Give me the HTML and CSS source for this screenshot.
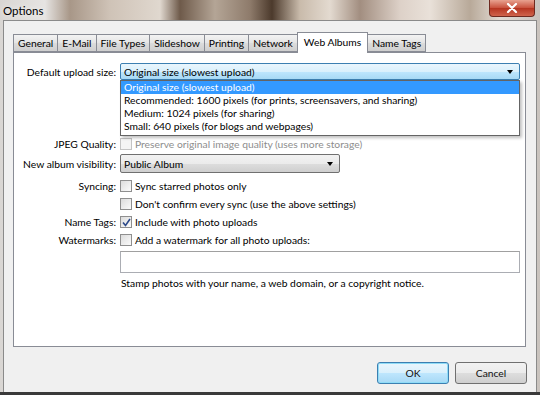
FILE: index.html
```html
<!DOCTYPE html>
<html lang="en">
  <head>
    <meta charset="UTF-8" />
    <title>Options</title>
    <link rel="stylesheet" href="styles.css">
  </head>
  <body>
    <div class="window">
      <div class="titlebar">
        <span class="title">Options</span>
        <button class="close-btn">
          <svg width="12" height="10" viewBox="0 0 12 10">
            <path d="M2 1 L10 9 M10 1 L2 9" stroke="#fff" stroke-width="2.2" stroke-linecap="round" />
          </svg>
        </button>
      </div>

      <div class="client">
        <div class="tabs">
          <div class="tab">General</div>
          <div class="tab">E-Mail</div>
          <div class="tab">File Types</div>
          <div class="tab">Slideshow</div>
          <div class="tab">Printing</div>
          <div class="tab">Network</div>
          <div class="tab active">Web Albums</div>
          <div class="tab">Name Tags</div>
        </div>

        <div class="panel">
          <div class="row row-upload">
            <label class="field-label">Default upload size:</label>
            <div class="combo combo-focus">
              <span>Original size (slowest upload)</span>
              <span class="arrow"></span>
              <ul class="combo-list">
                <li class="selected">Original size (slowest upload)</li>
                <li>Recommended: 1600 pixels (for prints, screensavers, and sharing)</li>
                <li>Medium: 1024 pixels (for sharing)</li>
                <li>Small: 640 pixels (for blogs and webpages)</li>
              </ul>
            </div>
          </div>

          <div class="row row-jpeg">
            <label class="field-label">JPEG Quality:</label>
            <div class="check disabled"><span class="box"></span>Preserve original image quality (uses more storage)</div>
          </div>

          <div class="row row-visibility">
            <label class="field-label">New album visibility:</label>
            <div class="combo combo-plain">
              <span>Public Album</span>
              <span class="arrow"></span>
            </div>
          </div>

          <div class="row row-sync">
            <label class="field-label">Syncing:</label>
            <div class="check"><span class="box"></span>Sync starred photos only</div>
          </div>

          <div class="row row-confirm">
            <label class="field-label"></label>
            <div class="check"><span class="box"></span>Don't confirm every sync (use the above settings)</div>
          </div>

          <div class="row row-tags">
            <label class="field-label">Name Tags:</label>
            <div class="check"><span class="box checked">
              <svg width="9" height="9" viewBox="0 0 9 9"><path d="M1 4.5 L3.5 7.5 L8 1" fill="none" stroke="#2d4a8a" stroke-width="1.6" /></svg>
            </span>Include with photo uploads</div>
          </div>

          <div class="row row-watermark">
            <label class="field-label">Watermarks:</label>
            <div class="check"><span class="box"></span>Add a watermark for all photo uploads:</div>
          </div>

          <div class="row row-input">
            <label class="field-label"></label>
            <input type="text" class="text-input" />
          </div>

          <div class="row row-hint">
            <label class="field-label"></label>
            <p class="hint">Stamp photos with your name, a web domain, or a copyright notice.</p>
          </div>
        </div>

        <div class="buttons">
          <button class="btn btn-default">OK</button>
          <button class="btn">Cancel</button>
        </div>
      </div>
    </div>
  </body>
</html>
```

FILE: styles.css
```css
* {
  box-sizing: border-box;
}

body {
  margin: 0;
  width: 540px;
  height: 395px;
  overflow: hidden;
  font-family: Lato, "Noto Sans", sans-serif;
  font-size: 10.3px;
  color: #000;
}

.window {
  width: 540px;
  height: 395px;
  display: flex;
  flex-direction: column;
  background: linear-gradient(90deg, #d9d6d3 0, #e6e4e2 45px, #a89788 70px, #cfc3b7 110px, #e0d8cf 160px, #6e5a4a 180px, #b4a596 215px, #8e7b6b 250px, #4c3a2c 272px, #c9bbab 300px, #e3dad0 330px, #a28e80 360px, #ddd1c8 400px, #e9e1d9 430px, #b8a999 470px, #e2dbd4 500px, #c8c2bd 540px);
  border-bottom: 3px solid #3a3a3a;
}

.titlebar {
  height: 20px;
  position: relative;
  display: flex;
  align-items: center;
  padding-left: 3px;
}

.title {
  font-size: 11.5px;
  color: #000;
  text-shadow: 0 0 6px rgba(255, 255, 255, 0.9);
}

.close-btn {
  position: absolute;
  right: 5px;
  top: 0;
  width: 46px;
  height: 17px;
  border: 1px solid #6e2a20;
  border-top: none;
  border-radius: 0 0 4px 4px;
  background: linear-gradient(#e8a290, #c8503c 50%, #b53420 51%, #d0644c);
  display: flex;
  align-items: center;
  justify-content: center;
  padding: 0;
}

.client {
  flex: 1;
  margin: 0 3px 0 3px;
  background: #f0f0f0;
  border: 1px solid #8a8a8a;
  border-bottom: none;
  padding: 12px 9px 0 9px;
  display: flex;
  flex-direction: column;
}

.tabs {
  display: flex;
  align-items: flex-end;
  height: 19px;
  position: relative;
  z-index: 1;
}

.tab {
  height: 18px;
  padding: 0 4px;
  border: 1px solid #898c95;
  border-right: none;
  background: linear-gradient(#f3f3f3, #e4e4e4 50%, #dcdcdc 51%, #cfcfcf);
  display: flex;
  align-items: center;
  white-space: nowrap;
}

.tab:last-child {
  border-right: 1px solid #898c95;
}

.tab.active {
  height: 21px;
  padding: 0 6px 2px;
  background: #fff;
  border-right: 1px solid #898c95;
  border-bottom: none;
  margin-bottom: -1px;
}

.tab.active + .tab {
  border-left: none;
}

.panel {
  height: 295px;
  background: #fff;
  border: 1px solid #898c95;
  margin-right: 1px;
  padding-top: 10px;
  display: flex;
  flex-direction: column;
}

.row {
  display: grid;
  grid-template-columns: 102px 1fr;
  column-gap: 4px;
  align-items: center;
  padding-right: 5px;
}

.field-label {
  text-align: right;
  white-space: nowrap;
}

.row-upload {
  height: 17px;
}

.row-jpeg {
  margin-top: 55px;
  height: 17px;
}

.row-visibility {
  margin-top: 2px;
  height: 19px;
}

.row-sync {
  margin-top: 4px;
  height: 18px;
}

.row-confirm,
.row-tags,
.row-watermark {
  height: 18px;
}

.row-input {
  margin-top: 2px;
  height: 22px;
}

.row-hint {
  margin-top: 1px;
  height: 18px;
}

.combo {
  position: relative;
  height: 17px;
  border: 1px solid #707070;
  border-radius: 2px;
  display: flex;
  align-items: center;
  padding-left: 3px;
}

.combo-focus {
  border-color: #3c7fb1;
  background: linear-gradient(#eaf6fd, #d9f0fc 50%, #bee6fd 51%, #a7d9f5);
}

.combo-plain {
  width: 220px;
  height: 19px;
  background: linear-gradient(#f2f2f2, #ebebeb 50%, #dddddd 51%, #cfcfcf);
}

.arrow {
  position: absolute;
  right: 6px;
  top: 6px;
  width: 0;
  height: 0;
  border-left: 3px solid transparent;
  border-right: 3px solid transparent;
  border-top: 4px solid #000;
}

.combo-plain .arrow {
  top: 7px;
}

.combo-list {
  position: absolute;
  left: -1px;
  right: -1px;
  top: 16px;
  margin: 0;
  padding: 0 0 2px;
  list-style: none;
  background: #fff;
  border: 1px solid #646464;
  box-shadow: 2px 2px 3px rgba(0, 0, 0, 0.25);
  z-index: 2;
}

.combo-list li {
  height: 13px;
  line-height: 13px;
  padding-left: 3px;
  white-space: nowrap;
}

.combo-list li.selected {
  background: #3399ff;
  color: #fff;
}

.check {
  display: flex;
  align-items: center;
  gap: 3px;
  white-space: nowrap;
}

.check.disabled {
  color: #8d8d8d;
}

.box {
  width: 12px;
  height: 12px;
  border: 1px solid #8f8f8f;
  background: linear-gradient(135deg, #dcdcdc, #fbfbfb);
  display: flex;
  align-items: center;
  justify-content: center;
}

.check.disabled .box {
  border-color: #c4c4c4;
  background: #f4f4f4;
}

.text-input {
  height: 22px;
  width: 100%;
  border: 1px solid #abadb3;
  border-top-color: #a0a0a0;
  font: inherit;
  margin: 0;
}

.hint {
  margin: 0;
  padding-left: 1px;
  white-space: nowrap;
}

.buttons {
  display: flex;
  justify-content: flex-end;
  gap: 6px;
  margin-top: 15px;
}

.btn {
  width: 72px;
  height: 22px;
  border: 1px solid #707070;
  border-radius: 3px;
  background: linear-gradient(#f2f2f2, #ebebeb 50%, #dddddd 51%, #cfcfcf);
  font: inherit;
  color: #111;
  padding: 0;
}

.btn-default {
  border-color: #3c7fb1;
  background: linear-gradient(#eaf6fd, #d9f0fc 50%, #bee6fd 51%, #a7d9f5);
  box-shadow: inset 0 0 0 1px #8fdcf7;
}
```
